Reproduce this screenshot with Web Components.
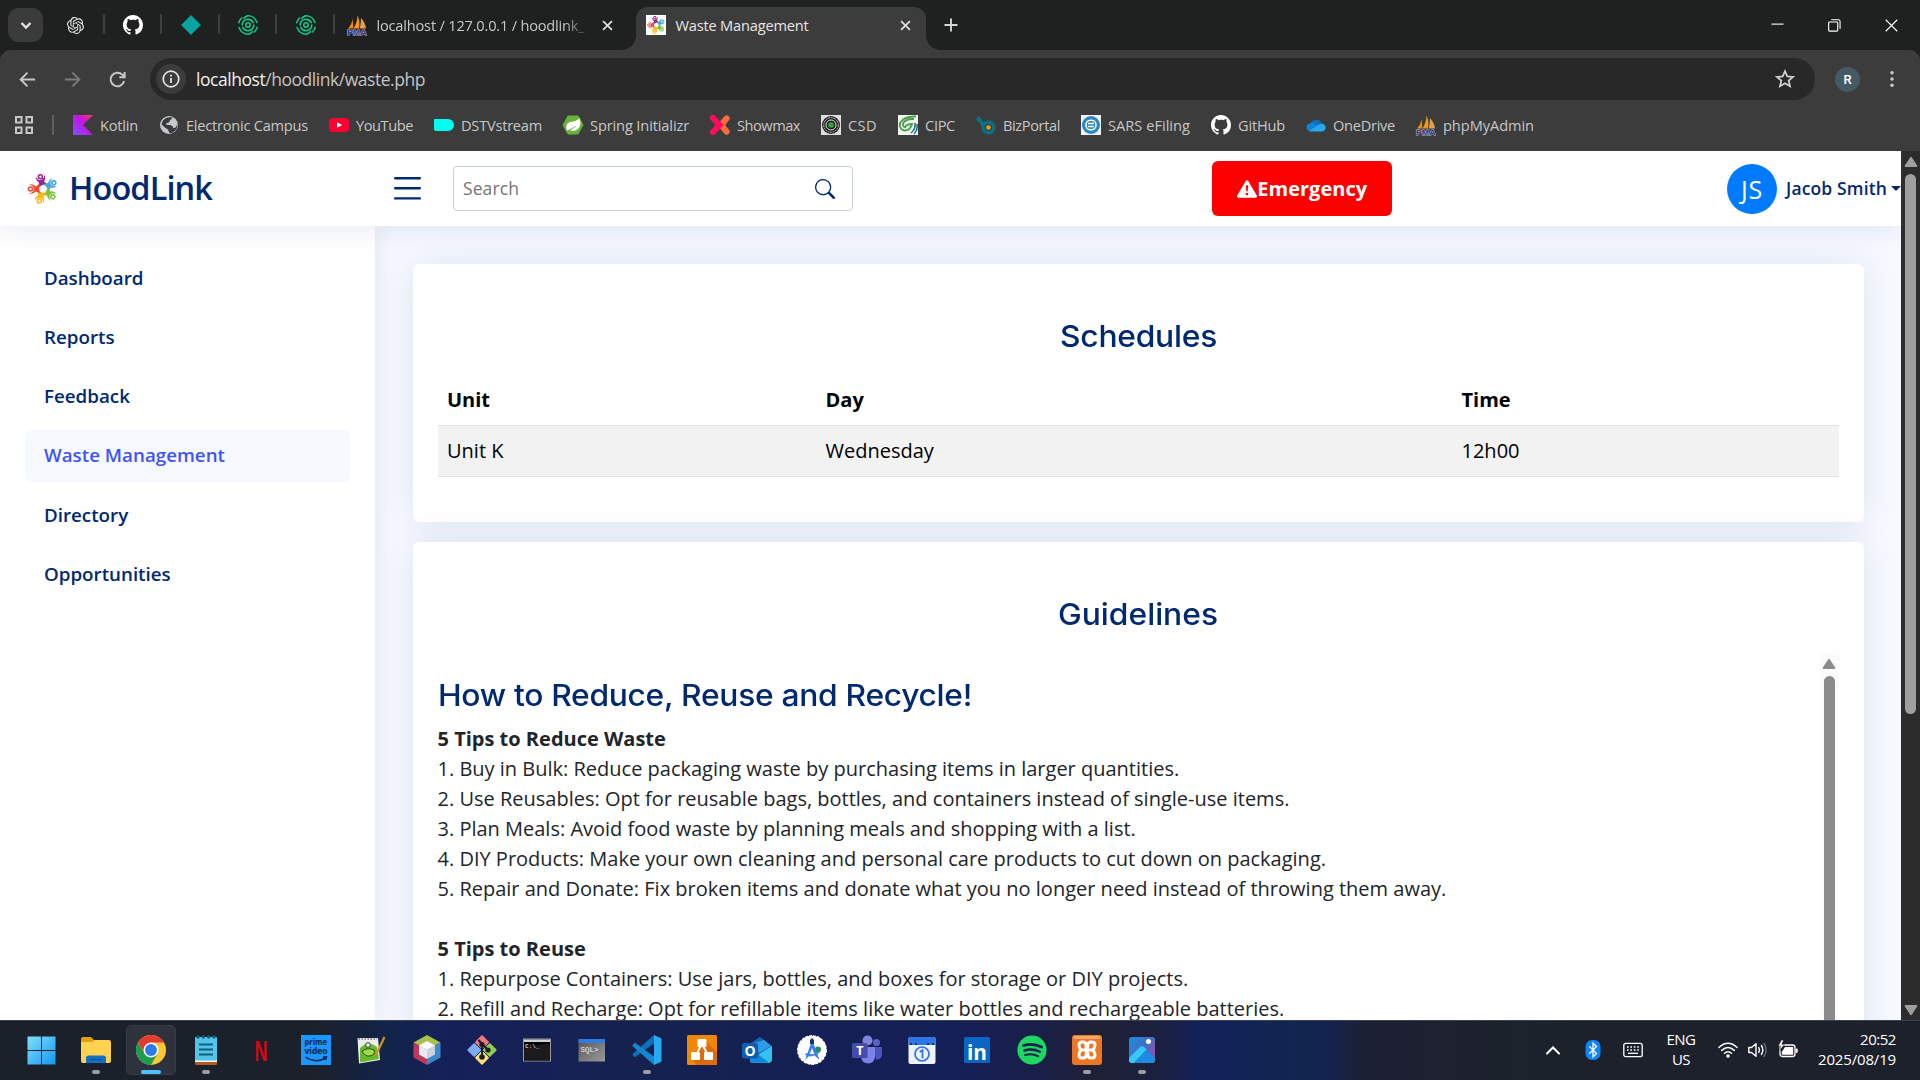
<!DOCTYPE html>
<html lang="en">
<head>
<meta charset="utf-8">
<title>Waste Management</title>
<style>
html,body{margin:0;padding:0;height:1080px;overflow:hidden}
body{font-family:"Open Sans","Noto Sans",sans-serif;font-size:20px;color:#212529;background:#fff}
</style>
</head>
<body>
<desktop-screen></desktop-screen>
<script>
const define = (name, html, setup) => customElements.define(name, class extends HTMLElement {
  connectedCallback() {
    if (this.shadowRoot) return;
    const root = this.attachShadow({ mode: 'open' });
    const t = document.createElement('template');
    t.innerHTML = typeof html === 'function' ? html(this) : html;
    root.append(t.content.cloneNode(true));
    if (setup) setup(this, root);
  }
});

/* Text set to a given advance width through letter spacing; sx widens the glyphs themselves. */
define('fit-text', `<style>:host{display:inline-block;white-space:nowrap;flex:none}span{display:inline-block;transform-origin:0 50%}</style><span><slot></slot></span>`,
  (el, root) => {
    const w = +el.getAttribute('w'), sx = +el.getAttribute('sx') || 1;
    if (!w) return;
    const s = root.querySelector('span'), n = el.textContent.length;
    s.style.letterSpacing = ((w / sx - s.getBoundingClientRect().width) / n) + 'px';
    if (sx !== 1) s.style.transform = `scaleX(${sx})`;
    el.style.width = w + 'px';
    el.style.textAlign = 'left';
  });

const sv = (vb, body) => `<svg viewBox="${vb}" xmlns="http://www.w3.org/2000/svg">${body}</svg>`;
const line = (d, c = '#c7c7c7', w = 2, x = '') => `<path d="${d}" fill="none" stroke="${c}" stroke-width="${w}" ${x}/>`;
const octocat = `<path fill="#fff" d="M8 0C3.58 0 0 3.58 0 8c0 3.54 2.29 6.53 5.47 7.59.4.07.55-.17.55-.38 0-.19-.01-.82-.01-1.49-2.01.37-2.53-.49-2.69-.94-.09-.23-.48-.94-.82-1.13-.28-.15-.68-.52-.01-.53.63-.01 1.08.58 1.23.82.72 1.21 1.87.87 2.33.66.07-.52.28-.87.51-1.07-1.78-.2-3.64-.89-3.64-3.95 0-.87.31-1.59.82-2.15-.08-.2-.36-1.02.08-2.12 0 0 .67-.21 2.2.82.64-.18 1.32-.27 2-.27s1.36.09 2 .27c1.53-1.04 2.2-.82 2.2-.82.44 1.1.16 1.92.08 2.12.51.56.82 1.27.82 2.15 0 3.07-1.87 3.75-3.65 3.95.29.25.54.73.54 1.48 0 1.07-.01 1.93-.01 2.2 0 .21.15.46.55.38A8.01 8.01 0 0 0 16 8c0-4.42-3.58-8-8-8z"/>`;
const person = (c, a) => `<g transform="rotate(${a} 15 15)"><circle cx="15" cy="2.500" r="2" fill="none" stroke="${c}" stroke-width="1.600"/><path d="M10.500 1.200C9.800 4 11 6.600 12.400 7.600L10.600 13.200Q14.500 9.600 20.600 12L17.600 7.600C19 6.600 20.200 4 19.500 1.200 18.600 4.300 17 5.800 15 5.800 13 5.800 11.400 4.300 10.500 1.200Z" fill="${c}"/></g>`;
const people = person('#95278f', -12) + person('#4aa8e0', 60) + person('#7fc241', 128) + person('#fdb813', 197) + person('#ef4b33', 270);

const ICONS = {
  chevdown: sv('0 0 20 20', line('M5.500 8 10 12.500 14.500 8', '#e3e3e3', 2.4)),
  openai: sv('0 0 24 24', `<path fill="#e8e8e8" d="M22.2819 9.8211a5.9847 5.9847 0 0 0-.5157-4.9108 6.0462 6.0462 0 0 0-6.5098-2.9A6.0651 6.0651 0 0 0 4.9807 4.1818a5.9847 5.9847 0 0 0-3.9977 2.9 6.0462 6.0462 0 0 0 .7427 7.0966 5.98 5.98 0 0 0 .511 4.9107 6.051 6.051 0 0 0 6.5146 2.9001A5.9847 5.9847 0 0 0 13.2599 24a6.0557 6.0557 0 0 0 5.7718-4.2058 5.9894 5.9894 0 0 0 3.9977-2.9001 6.0557 6.0557 0 0 0-.7475-7.0729zm-9.022 12.6081a4.4755 4.4755 0 0 1-2.8764-1.0408l.1419-.0804 4.7783-2.7582a.7948.7948 0 0 0 .3927-.6813v-6.7369l2.02 1.1686a.071.071 0 0 1 .038.052v5.5826a4.504 4.504 0 0 1-4.4945 4.4944zm-9.6607-4.1254a4.4708 4.4708 0 0 1-.5346-3.0137l.142.0852 4.783 2.7582a.7712.7712 0 0 0 .7806 0l5.8428-3.3685v2.3324a.0804.0804 0 0 1-.0332.0615L9.74 19.9502a4.4992 4.4992 0 0 1-6.1408-1.6464zM2.3408 7.8956a4.485 4.485 0 0 1 2.3655-1.9728V11.6a.7664.7664 0 0 0 .3879.6765l5.8144 3.3543-2.0201 1.1685a.0757.0757 0 0 1-.071 0l-4.8303-2.7865A4.504 4.504 0 0 1 2.3408 7.872zm16.5963 3.8558L13.1038 8.364 15.1192 7.2a.0757.0757 0 0 1 .071 0l4.8303 2.7913a4.4944 4.4944 0 0 1-.6765 8.1042v-5.6772a.79.79 0 0 0-.407-.667zm2.0107-3.0231l-.142-.0852-4.7735-2.7818a.7759.7759 0 0 0-.7854 0L9.409 9.2297V6.8974a.0662.0662 0 0 1 .0284-.0615l4.8303-2.7866a4.4992 4.4992 0 0 1 6.6802 4.66zM8.3065 12.863l-2.02-1.1638a.0804.0804 0 0 1-.038-.0567V6.0742a4.4992 4.4992 0 0 1 7.3757-3.4537l-.142.0805L8.704 5.459a.7948.7948 0 0 0-.3927.6813zm1.0976-2.3654l2.602-1.4998 2.6069 1.4998v2.9994l-2.5974 1.4997-2.6067-1.4997Z"/>`),
  github: sv('0 0 16 16', octocat),
  diamond: sv('0 0 20 20', `<path d="M10 .6 19.400 10 10 19.400 .6 10Z" fill="#0aa5a0" stroke="#0aa5a0" stroke-linejoin="round"/>`),
  finger: sv('0 0 20 20', `<g fill="none" stroke="#12c98b" stroke-width="1.600" stroke-linecap="round"><circle cx="10" cy="10" r="2.200"/><path d="M4.200 10a5.800 5.800 0 0 1 11-2.300M15.800 10a5.800 5.800 0 0 1-11 2.300M.9 7.600A9.300 9.300 0 0 1 3.600 3M5.800 3.300A9 9 0 0 1 9 .9C13.500 .4 17.500 3 18.900 7.400M19.100 12.400A9.300 9.300 0 0 1 16.400 17M14.200 16.700A9 9 0 0 1 11 19.100C6.500 19.600 2.500 17 1.100 12.600"/></g>`),
  pma: sv('0 0 20 20', `<path d="M1 13.500Q5 9 5.600 3.500L6.400 13.500Z" fill="#e88a1a"/><path d="M6.600 13.500Q10.500 7 10.500 .3 13.500 7 12 13.500Z" fill="#f7941d"/><path d="M12.800 13.500Q14 8 14 3 18.500 8 19 13.500Z" fill="#e0a050"/><text x="0" y="19.800" font-family="Liberation Sans" font-weight="700" font-size="7.600" fill="#34357a" stroke="#b9b9d8" stroke-width=".9" paint-order="stroke" textLength="19.500" lengthAdjust="spacingAndGlyphs">PMA</text>`),
  hood: sv('0 0 30 30', people),
  hoodtile: sv('0 0 30 30', `<rect width="30" height="30" fill="#fff"/><g transform="translate(2 1.500) scale(.9)">${people}</g>`),
  close: sv('0 0 14 14', line('M2.200 2.200 11.800 11.800M11.800 2.200 2.200 11.800', '#dedede', 1.9)),
  plus: sv('0 0 14 14', line('M7 .5V13.500M.5 7H13.500', '#d6d6d6', 1.9)),
  wmin: sv('0 0 14 14', line('M.5 5.500H13.500', '#fff', 1.2)),
  wmax: sv('0 0 14 14', `<rect x=".7" y="3.200" width="9.800" height="9.800" rx="1" fill="none" stroke="#fff" stroke-width="1.200"/>` + line('M3.500 .8H11.200Q13 .8 13 2.600V10.500', '#fff', 1.2)),
  wclose: sv('0 0 14 14', line('M.8 .8 13.200 13.200M13.200 .8 .8 13.200', '#fff', 1.2)),
  back: sv('0 0 20 20', line('M18 10H3M10 2.800 2.800 10 10 17.200', '#c7c7c7', 2)),
  fwd: sv('0 0 20 20', line('M2 10H17M10 2.800 17.200 10 10 17.200', '#7b7b7b', 2)),
  reload: sv('0 0 20 20', line('M16.300 11.500A6.500 6.500 0 1 1 14.600 5.400L16.600 7.400M16.800 2.800V7.800H11.800', '#c7c7c7', 1.9)),
  info: sv('0 0 20 20', `<circle cx="10" cy="10" r="7.800" fill="none" stroke="#e3e3e3" stroke-width="1.700"/><path d="M9.100 9h1.800v5H9.100zM9.100 5.800h1.800v1.800H9.100z" fill="#e3e3e3"/>`),
  star: sv('0 0 20 20', line('M10 2.200 12.300 7.400 18 7.900 13.700 11.600 15 17.200 10 14.200 5 17.200 6.300 11.600 2 7.900 7.700 7.400Z', '#d0d0d0', 1.8)),
  dots: sv('0 0 20 20', `<g fill="#c7c7c7"><circle cx="10" cy="3" r="2"/><circle cx="10" cy="10" r="2"/><circle cx="10" cy="17" r="2"/></g>`),
  apps: sv('0 0 20 20', `<g fill="none" stroke="#c7c7c7" stroke-width="2"><rect x="2" y="2" width="5.500" height="5.500"/><rect x="12.500" y="2" width="5.500" height="5.500"/><rect x="2" y="12.500" width="5.500" height="5.500"/><rect x="12.500" y="12.500" width="5.500" height="5.500"/></g>`),
  kotlin: sv('0 0 20 20', `<defs><linearGradient id="k" x1="1" y1="0" x2="0" y2="1"><stop offset="0" stop-color="#e44857"/><stop offset=".4" stop-color="#c711e1"/><stop offset="1" stop-color="#7f52ff"/></linearGradient></defs><path d="M0 0H20L10 10 20 20H0Z" fill="url(#k)"/>`),
  globe: sv('0 0 20 20', `<circle cx="10" cy="10" r="9" fill="#c4c7cb"/><path d="M6.200 3.500Q10 1.500 13.500 2.600 14 5 11 5.500 10.500 8 7.500 8V10H12Q14.500 11 14.500 13 18 12.500 17.800 9.200L18.400 8Q19.300 15 13 18 11 18.500 10 17.200L9 14.500Q6 13 2.600 9.500 3 5.500 6.200 3.500Z" fill="#3c3c3c"/><path d="M11 5.500Q13.500 4 13 2.500 18 5 18 10 17 12.500 14.500 13 14 10.500 11.500 10H8V8.400Q11 8 11 5.500Z" fill="#c4c7cb"/>`),
  youtube: sv('0 0 20 20', `<rect y="3" width="20" height="14" rx="3.500" fill="#ff0033"/><path d="M8 7.200 13.200 10 8 12.800Z" fill="#fff"/>`),
  dstv: sv('0 0 20 20', `<path d="M0 4H14A6 6 0 0 1 14 16H2Q0 16 0 14Z" fill="#00ffee"/>`),
  spring: sv('0 0 20 20', `<path d="M5 1H15L20 10 15 19H5L0 10Z" fill="#68b13a" stroke="#68b13a" stroke-linejoin="round"/><path d="M4 15.500Q1.500 9 7 7 14 6.500 16.500 3 19 10 15 14 11 17.300 6.500 15.200 10 14.600 14 10 9 14 4 15.500Z" fill="#fff"/>`),
  showmax: sv('0 0 20 20', `<path d="M16.600 3.400 12.500 8.500M16.600 16.600 12.500 11.500" stroke="#ff6b3d" stroke-width="6" stroke-linecap="round"/><path d="M3 3 9.500 10 3 17" fill="none" stroke="#ff0d5c" stroke-width="6" stroke-linecap="round"/>`),
  csd: sv('0 0 20 20', `<rect width="20" height="20" fill="#dfe0dd"/><circle cx="10" cy="10" r="9" fill="#222"/><circle cx="10" cy="10" r="7.300" fill="none" stroke="#ccc" stroke-width=".9" stroke-dasharray="2 .6"/><circle cx="10" cy="10" r="5" fill="none" stroke="#ddd"/><circle cx="10" cy="10" r="2.800" fill="#35a535"/>`),
  cipc: sv('0 0 20 20', `<rect width="20" height="20" fill="#f3f5f1"/><path d="M18 1.500Q6 1 2 8 1 14 6 15.500 12 16 14 9 9 9 7.500 11.500M16 4Q8 3.500 5 8.500 4.500 12 8 12.500" fill="none" stroke="#49a248" stroke-width="1.900"/><path d="M17 8Q18 14 13 18M19 9Q20 15 16 19" fill="none" stroke="#1e7185" stroke-width="1.600"/>`),
  biz: sv('0 0 20 20', `<circle cx="12.500" cy="12.500" r="5.300" fill="none" stroke="#0b7285" stroke-width="3.500"/><path d="M1.500 2.500 8 11" stroke="#0b7285" stroke-width="4"/><circle cx="12.500" cy="12.500" r="2.300" fill="#f39c12"/>`),
  sars: sv('0 0 20 20', `<rect width="20" height="20" fill="#eef4f9"/><circle cx="10" cy="10" r="9" fill="#2e86c1"/><rect x="5" y="5.200" width="10" height="9.600" rx="4.500" fill="none" stroke="#fff" stroke-width="1.500"/><path d="M7 8.500H13M7 11.500H13" stroke="#fff" stroke-width="1.300"/>`),
  onedrive: sv('0 0 20 20', `<path d="M4.500 8.500A6 6 0 0 1 15.500 8 4.500 4.500 0 0 1 17 16H4.500A4 4 0 0 1 4.500 8.500Z" fill="#0f6cbd"/><path d="M4.500 8.500Q7 7.500 9 9L15 13 4 16.200A4.200 4.200 0 0 1 .5 12Q.8 8.700 4.500 8.500Z" fill="#1283d8"/><path d="M3 16 11 10.800Q15 7.600 18 9.300 20 10.800 19.600 13.500 18.500 16.400 16 16.400H4.500Q3.500 16.400 3 16Z" fill="#28a8ea"/>`),
  burger: sv('0 0 27 25', line('M1.200 2.200H25.800M1.200 12.300H25.800M1.200 22.400H25.800', '#012970', 2.4, 'stroke-linecap="round"')),
  search: sv('0 0 16 16', `<path fill="#012970" d="M11.742 10.344a6.500 6.500 0 1 0-1.397 1.398h-.001c.03.04.062.078.098.115l3.850 3.850a1 1 0 0 0 1.415-1.414l-3.850-3.850a1.007 1.007 0 0 0-.115-.1zM12 6.500a5.500 5.500 0 1 1-11 0 5.500 5.500 0 0 1 11 0z"/>`),
  warn: sv('0 0 16 16', `<path fill="#fff" d="M8.982 1.566a1.130 1.130 0 0 0-1.960 0L.165 13.233c-.457.778.091 1.767.98 1.767h13.713c.889 0 1.438-.99.98-1.767L8.982 1.566zM8 5c.535 0 .954.462.9.995l-.35 3.507a.552.552 0 0 1-1.100 0L7.100 5.995A.905.905 0 0 1 8 5zm.002 6a1 1 0 1 1 0 2 1 1 0 0 1 0-2z"/>`),
  windows: sv('0 0 30 30', `<defs><linearGradient id="w" x2="1" y2="1"><stop offset="0" stop-color="#7fe0ff"/><stop offset="1" stop-color="#1497ef"/></linearGradient></defs><path d="M.5 .5H14.500V14.500H.5ZM15.500 .5H29.500V14.500H15.500ZM.5 15.500H14.500V29.500H.5ZM15.500 15.500H29.500V29.500H15.500Z" fill="url(#w)"/>`),
  folder: sv('0 0 30 30', `<path d="M0 4Q0 2 2 2H10L13 5H28V12H0Z" fill="#e0a10c"/><path d="M0 7H11L14 5H28Q30 5 30 7V26Q30 28 28 28H2Q0 28 0 26Z" fill="#ffd251"/><path d="M5 28V23Q5 20.500 7.500 20.500H22.500Q25 20.500 25 23V28Z" fill="#1273c4"/><path d="M9 24.500H21" stroke="#0b4f93" stroke-width="1.400"/>`),
  chrome: sv('0 0 30 30', `<circle cx="15" cy="15" r="15" fill="#fcc934"/><path d="M2 7.500A15 15 0 0 1 28 7.500H15L8.500 18.750Z" fill="#e33b2e"/><path d="M2 7.500A15 15 0 0 0 15 30L21.500 18.750 8.500 18.750Z" fill="#1e9b4e"/><circle cx="15" cy="15" r="7.500" fill="#fff"/><circle cx="15" cy="15" r="6" fill="#2b7de9"/>`),
  notepad: sv('0 0 30 30', `<rect x="4" y="24" width="22" height="6" rx="1" fill="#b25a1c"/><rect x="4" y="22" width="22" height="5" fill="#eef4f7"/><rect x="4" y="2" width="22" height="23.500" rx="1" fill="#54c3e8"/><path d="M8 9.500H22M8 14.500H22M8 19.500H22" stroke="#0d6080" stroke-width="1.800"/><g fill="#14617e"><circle cx="7" cy="2" r="1.700"/><circle cx="12.300" cy="2" r="1.700"/><circle cx="17.700" cy="2" r="1.700"/><circle cx="23" cy="2" r="1.700"/></g>`),
  netflix: sv('0 0 30 30', `<text x="8.500" y="26" font-family="Liberation Sans" font-weight="700" font-size="30" fill="#d20a12" textLength="13" lengthAdjust="spacingAndGlyphs">N</text>`),
  prime: sv('0 0 30 30', `<rect width="30" height="30" fill="#1a98ff"/><g font-family="Open Sans" font-weight="700" font-size="8" fill="#06213c"><text x="3.500" y="9.500" textLength="22.500" lengthAdjust="spacingAndGlyphs">prime</text><text x="3.500" y="19" textLength="23" lengthAdjust="spacingAndGlyphs">video</text></g>` + line('M4.500 22Q14 28.500 24 23.500M22 22H25.500L24.500 25', '#06213c', 1.4)),
  npp: sv('0 0 30 30', `<path d="M1.500 3H22L24 25 3 28.500Z" fill="#eceee9"/><path d="M4 13Q12 5 21 12L23 24 4 27.500Z" fill="#67b92e"/><path d="M6 16Q12 12 18 15 20 20 14 21 9 22 6 16" fill="#9ddb4a" stroke="#27520f" stroke-width="1"/><circle cx="12" cy="10" r="2.400" fill="#dff0c9" stroke="#345"/><path d="M2.500 4H21" stroke="#777" stroke-width="1.500" stroke-dasharray="1.500 1.500"/><path d="M28.500 2 20 20" stroke="#d99021" stroke-width="2.200"/>`),
  netbeans: sv('0 0 30 30', `<path d="M15 0 28.500 7.500 15 15 1.500 7.500Z" fill="#a9c04c"/><path d="M1.500 7.500 15 15V30L1.500 22.500Z" fill="#c1385f"/><path d="M28.500 7.500 15 15V30L28.500 22.500Z" fill="#3f86cf"/><path d="M15 6 23 10.500 15 15 7 10.500Z" fill="#fff"/><path d="M7 10.500 15 15V24L7 19.500Z" fill="#e9edf0"/><path d="M23 10.500 15 15V24L23 19.500Z" fill="#c9d3da"/>`),
  git: sv('0 0 30 30', `<g transform="rotate(45 15 15)"><rect x="4.500" y="4.500" width="10" height="10" rx="1" fill="#f3787a"/><rect x="15.500" y="4.500" width="10" height="10" rx="1" fill="#f3787a"/><rect x="4.500" y="15.500" width="10" height="10" rx="1" fill="#7faaf5"/><rect x="15.500" y="15.500" width="10" height="10" rx="1" fill="#8cd24f"/></g><g transform="rotate(45 15 15)"><rect x="4.500" y="4.500" width="10" height="10" rx="1" fill="#f3787a"/><rect x="15.500" y="4.500" width="10" height="10" rx="1" fill="#8cd24f"/><rect x="4.500" y="15.500" width="10" height="10" rx="1" fill="#7faaf5"/><rect x="15.500" y="15.500" width="10" height="10" rx="1" fill="#ffdf75"/></g>` + line('M11.500 5 15 9V22M15 9 21 15', '#1d1d2b', 2) + `<g fill="#1d1d2b"><circle cx="15" cy="9.500" r="2.600"/><circle cx="15" cy="22" r="2.800"/><circle cx="21" cy="15" r="2.600"/></g>`),
  cmd: sv('0 0 30 30', `<rect x="1.500" y="4" width="27" height="22" fill="#050505" stroke="#999"/><rect x="2" y="4.500" width="26" height="2.500" fill="#cfd3d6"/><path d="M2 14Q16 9 28 9V25.500H2Z" fill="#1b1b1b"/><text x="3" y="13" font-family="Liberation Mono" font-weight="700" font-size="6" fill="#d8d8d8">C:\\_</text>`),
  sql: sv('0 0 30 30', `<defs><linearGradient id="q" x2="1" y2="1"><stop offset="0" stop-color="#555"/><stop offset="1" stop-color="#9a9a9a"/></linearGradient></defs><rect x="1.500" y="4" width="26.500" height="22.500" fill="url(#q)"/><rect x="1.500" y="4" width="26.500" height="4" fill="#2f7be0"/><text x="3.500" y="17" font-family="Liberation Mono" font-size="7.500" fill="#eee" textLength="18">SQL&gt;</text>`),
  vscode: sv('0 0 30 30', `<path d="M22 0 29.500 3.500V26.500L22 30Z" fill="#29a9f2"/><path d="M22 0 1 18.500Q0 19.500 1 20.500L3 22.200 22 8.500Z" fill="#0a70b8"/><path d="M22 30 1 11.500Q0 10.500 1 9.500L3 7.800 22 21.500Z" fill="#1487cf"/>`),
  drawio: sv('0 0 30 30', `<rect width="30" height="30" rx="1.500" fill="#f08705"/><path d="M18 5 30 17V28.500Q30 30 28.500 30H10L4 24Z" fill="#df6c0c"/><path d="M15 9 9 20M15 9 21 20" stroke="#fff" stroke-width="2"/><g fill="#fff"><rect x="10.500" y="4" width="9" height="8" rx="1"/><rect x="4" y="17" width="9" height="8" rx="1"/><rect x="17" y="17" width="9" height="8" rx="1"/></g>`),
  outlook: sv('0 0 30 30', `<path d="M6 10 18 2 30 11 18 20Z" fill="#1565b5"/><path d="M12 8 22 5 29 11 17 18Z" fill="#2c9be8"/><path d="M30 11V24Q30 28 26 28H10Q8 28 8 25Z" fill="#33c2ef"/><path d="M8 13 27 27.800H11Q8 28 8 25Z" fill="#1189d8"/><rect y="8" width="16" height="15.500" rx="2" fill="#0f5eb0"/><text x="8" y="20.500" text-anchor="middle" font-family="Open Sans" font-weight="700" font-size="14" fill="#fff">O</text>`),
  astudio: sv('0 0 30 30', `<circle cx="15" cy="15" r="14.300" fill="#fff" stroke="#fff" stroke-width="1.200" stroke-dasharray="3 1"/><circle cx="21" cy="14.500" r="3" fill="#22914b"/><path d="M14.500 7 8 25 12 21 15 13 18 21 22.500 25 16 7Z" fill="#3b7ded"/><path d="M8.500 19Q15 22.500 22 17" fill="none" stroke="#3b7ded" stroke-width="2"/><path d="M13 9V5L15 3 17 5V9Z" fill="#1b3461"/>`),
  teams: sv('0 0 30 30', `<circle cx="24.500" cy="7.500" r="3.500" fill="#5b62c4"/><path d="M21 12H30V20Q29 25 24 24.500Z" fill="#4b53bc"/><circle cx="15.500" cy="5.500" r="5" fill="#8186dd"/><path d="M9 12H23V22Q22 28.500 16 28.500 10 28 9 22Z" fill="#7b83eb"/><rect y="8" width="15.500" height="15" rx="1.500" fill="#474ba8"/><text x="7.800" y="20" text-anchor="middle" font-family="Open Sans" font-weight="700" font-size="12.500" fill="#fff">T</text>`),
  calendar: sv('0 0 30 30', `<rect x="1.500" y="2" width="27" height="27" rx="2" fill="#eef3fb"/><path d="M1.500 10V4Q1.500 2 3.500 2H26.500Q28.500 2 28.500 4V10Z" fill="#2f76e4"/><path d="M4 8V10M9 8V10M21 8V10M26 8V10" stroke="#123" stroke-width="1.500"/><circle cx="15" cy="19" r="7" fill="none" stroke="#2f76e4" stroke-width="1.700"/>` + line('M12.800 17 15.500 15V23.500', '#2f76e4', 1.8)),
  linkedin: sv('0 0 30 30', `<rect x="2" y="2" width="26" height="26" rx="1.500" fill="#0a66c2"/><text x="15" y="24.500" text-anchor="middle" font-family="Open Sans" font-weight="700" font-size="22" fill="#fff" textLength="20" lengthAdjust="spacingAndGlyphs">in</text>`),
  spotify: sv('0 0 30 30', `<circle cx="15" cy="15" r="14.600" fill="#1ed760"/>` + line('M6.500 10.500Q16 7.500 24.500 12', '#14204f', 2.8, 'stroke-linecap="round"') + line('M7.500 15.500Q15.500 13 22.800 16.800', '#14204f', 2.4, 'stroke-linecap="round"') + line('M8.200 20Q15 18 21 21.200', '#14204f', 2, 'stroke-linecap="round"')),
  xampp: sv('0 0 30 30', `<rect width="30" height="30" rx="3" fill="#ee7623"/><rect x="1.500" y="1" width="27" height="3" rx="1.500" fill="#f9a66c"/><path d="M14 12V10Q14 7 11 7H10Q7 7 7 10 7 12.500 9 15 7 17.500 7 20 7 23 10 23H11Q14 23 14 20L16 10Q16 7 19 7H20Q23 7 23 10 23 12.500 21 15 23 17.500 23 20 23 23 20 23H19Q16 23 16 20V18M10.500 15H19.500" fill="none" stroke="#fff" stroke-width="3" stroke-linecap="round" stroke-linejoin="round"/>`),
  photos: sv('0 0 30 30', `<defs><linearGradient id="p" x2="1" y2=".8"><stop offset="0" stop-color="#1a90e0"/><stop offset=".5" stop-color="#3f6fc4"/><stop offset="1" stop-color="#a04bb0"/></linearGradient></defs><rect x="2" y="2" width="26" height="26" rx="3" fill="url(#p)"/><path d="M2 23 12.500 12.500Q15 10 17.500 12.500L28 23V25Q28 28 25 28H5Q2 28 2 25Z" fill="#1c8be0"/><path d="M2 23 12.500 12.500Q15 10 17.500 12.500L19.500 14.500 6.500 28H5Q2 28 2 25Z" fill="#37c8f6"/><circle cx="21.500" cy="6.500" r="2.500" fill="#fff"/>`),
  up: sv('0 0 20 20', line('M4 13.500 10 7.500 16 13.500', '#fff', 2, 'stroke-linecap="round"')),
  bt: sv('0 0 20 20', `<rect x="2.500" width="15" height="20" rx="6.500" fill="#0a84ff"/>` + line('M6.200 6.200 13.500 13.500 10 17V3L13.500 6.500 6.200 13.800', '#fff', 1.3)),
  kbd: sv('0 0 20 20', `<rect x=".8" y="3.300" width="18.400" height="13.400" rx="2" fill="none" stroke="#fff" stroke-width="1.300"/><path d="M4 7H16.500M4 10H16.500" stroke="#fff" stroke-width="1.500" stroke-dasharray="1.600 1.800"/><path d="M5 13.300H15" stroke="#fff" stroke-width="1.300"/>`),
  wifi: sv('0 0 20 20', `<g fill="none" stroke="#fff" stroke-width="1.500" stroke-linecap="round"><path d="M.9 7.500Q10-1 19.100 7.500M3.700 10.400Q10 4.700 16.300 10.400M6.500 13.200Q10 10.200 13.500 13.200"/></g><circle cx="10" cy="16" r="1.800" fill="#fff"/>`),
  vol: sv('0 0 20 20', `<g fill="none" stroke="#fff" stroke-width="1.400" stroke-linecap="round" stroke-linejoin="round"><path d="M.8 7.500H3.500L8 3.700V16.300L3.500 12.500H.8Z"/><path d="M10.800 7.600Q12.300 10 10.800 12.400M13.400 5.500Q16.300 10 13.400 14.500"/><path d="M16 3.500Q20.300 10 16 16.500" stroke="#666b75"/></g>`),
  battery: sv('0 0 20 20', `<rect x="2" y="5" width="15" height="11.500" rx="2.500" fill="none" stroke="#fff" stroke-width="1.300"/><path d="M7 7H15.200V14.700H3.800V12Z" fill="#fff"/><rect x="17.700" y="8.500" width="2" height="4.400" rx="1" fill="#fff"/><path d="M3.500 0 .2 6H2.700L1.700 10.500 6.300 4.500H3.800L5.500 0Z" fill="#fff" stroke="#1c212b" stroke-width=".5"/>`),
  triup: sv('0 0 14 12', `<path d="M7 1.800 12.400 10H1.600Z" fill="currentColor" stroke="currentColor" stroke-width="1.800" stroke-linejoin="round"/>`),
  tridown: sv('0 0 14 12', `<path d="M7 10.200 12.400 2H1.600Z" fill="currentColor" stroke="currentColor" stroke-width="1.800" stroke-linejoin="round"/>`)
};
define('ui-icon', el => {
  const s = el.getAttribute('size') || 20, h = el.getAttribute('h') || s;
  return `<style>:host{display:block;flex:none;width:${s}px;height:${h}px}svg{display:block;width:100%;height:100%;overflow:visible}</style>${ICONS[el.getAttribute('name')]}`;
});

/* ---------- browser window ---------- */
define('pinned-tab', el => `<style>:host{display:flex;width:57.500px;height:34px;align-items:center;justify-content:center;position:relative;flex:none}
:host::after{content:"";position:absolute;right:0;top:6px;width:2px;height:20px;border-radius:1px;background:#3f403f}</style><ui-icon name="${el.getAttribute('icon')}" size="${el.getAttribute('size') || 20}"></ui-icon>`);

define('tab-strip', `<style>
:host{display:flex;height:50px;background:#1f2120;align-items:center;box-sizing:border-box;padding-left:8px;font-size:14.600px;color:#c8c8c8}
.drop{width:35px;height:34px;border-radius:11px;background:#3b3b3b;display:grid;place-items:center;margin-right:4px;flex:none}
.pins{display:flex}
.old{display:flex;align-items:center;width:289px;margin-left:12px;flex:none;box-sizing:border-box}
.old .t{width:212px;margin-left:10px;overflow:hidden;margin-right:12px;-webkit-mask:linear-gradient(90deg,#000 88%,transparent)}
.act{position:relative;display:flex;align-items:center;box-sizing:border-box;width:290px;height:43px;margin:7px 0 0;padding:0 14px 7px 10px;background:#3c3c3c;border-radius:12px 12px 0 0;color:#e6e6e6;flex:none}
.act::before,.act::after{content:"";position:absolute;bottom:0;width:14px;height:14px}
.act::before{left:-14px;background:radial-gradient(circle at 0 0,transparent 13.500px,#3c3c3c 14px)}
.act::after{right:-14px;background:radial-gradient(circle at 100% 0,transparent 13.500px,#3c3c3c 14px)}
.act fit-text{margin-left:10px}.act .x{margin-left:auto}
.plus{margin-left:18px}.win{margin-left:auto;display:flex;gap:44px;padding-right:22px}
</style>
<div class="drop"><ui-icon name="chevdown" size="20"></ui-icon></div>
<div class="pins"><pinned-tab icon="openai" size="17"></pinned-tab><pinned-tab icon="github"></pinned-tab><pinned-tab icon="diamond"></pinned-tab><pinned-tab icon="finger"></pinned-tab><pinned-tab icon="finger"></pinned-tab></div>
<div class="old"><ui-icon name="pma" size="20"></ui-icon><div class="t"><fit-text w="208">localhost / 127.0.0.1 / hoodlink_</fit-text></div><ui-icon name="close" size="13"></ui-icon></div>
<div class="act"><ui-icon name="hoodtile" size="20"></ui-icon><fit-text w="133">Waste Management</fit-text><ui-icon class="x" name="close" size="13"></ui-icon></div>
<ui-icon class="plus" name="plus" size="14"></ui-icon>
<div class="win"><ui-icon name="wmin" size="13"></ui-icon><ui-icon name="wmax" size="13"></ui-icon><ui-icon name="wclose" size="13"></ui-icon></div>`);

define('address-bar', `<style>
:host{display:flex;align-items:center;height:58px;padding-left:18px;color:#c4c4c4;font-size:17.500px;box-sizing:border-box}
.omni{width:1665px;height:42px;border-radius:21px;background:#282828;margin-left:22px;display:flex;align-items:center;box-sizing:border-box;padding:0 20px 0 6px}
.i{width:30px;height:30px;border-radius:50%;background:#3c3c3c;display:grid;place-items:center;margin-right:10px}
b{font-weight:400;color:#f0f0f0}.omni .s{margin-left:auto}
.av{width:25px;height:25px;border-radius:50%;background:#455a64;color:#fff;display:grid;place-items:center;font:500 13px Roboto,sans-serif;margin:0 23px 0 20px}
.f{margin:0 25px 0 26px}</style>
<ui-icon name="back" size="19"></ui-icon><ui-icon class="f" name="fwd" size="19"></ui-icon><ui-icon name="reload" size="21"></ui-icon>
<div class="omni"><div class="i"><ui-icon name="info" size="20"></ui-icon></div><fit-text w="229"><b>localhost</b>/hoodlink/waste.php</fit-text><ui-icon class="s" name="star" size="20"></ui-icon></div>
<div class="av">R</div><ui-icon name="dots" size="18"></ui-icon>`);

define('book-mark', el => `<style>:host{display:flex;align-items:center;gap:7px;flex:none}</style><ui-icon name="${el.getAttribute('icon')}" size="20"></ui-icon><fit-text w="${el.getAttribute('w')}">${el.textContent}</fit-text>`);
const marks = [['kotlin', 38, 'Kotlin'], ['globe', 122, 'Electronic Campus'], ['youtube', 57, 'YouTube'], ['dstv', 81, 'DSTVstream'], ['spring', 99, 'Spring Initializr'], ['showmax', 63, 'Showmax'], ['csd', 29, 'CSD'], ['cipc', 30, 'CIPC'], ['biz', 57, 'BizPortal'], ['sars', 82, 'SARS eFiling'], ['github', 47, 'GitHub'], ['onedrive', 62, 'OneDrive'], ['pma', 91, 'phpMyAdmin']];
define('bookmarks-bar', `<style>:host{display:flex;align-items:center;height:43px;padding:0 0 10px 14px;box-sizing:border-box;font-size:14.600px;color:#c7c7c7}
i{width:2px;height:20px;background:#5f5f5f;margin:0 19px 0 18px}div{display:flex;gap:21px}</style><ui-icon name="apps" size="20"></ui-icon><i></i><div>${marks.map(m => `<book-mark icon="${m[0]}" w="${m[1]}">${m[2]}</book-mark>`).join('')}</div>`);

define('browser-chrome', `<style>:host{display:block;height:151px;background:#1f2120;flex:none}.bar{background:#3c3c3c;border-radius:11px 11px 0 0;height:101px}</style><tab-strip></tab-strip><div class="bar"><address-bar></address-bar><bookmarks-bar></bookmarks-bar></div>`);

/* ---------- HoodLink page ---------- */
define('site-header', `<style>
:host{display:flex;align-items:center;height:75px;background:#fff;box-shadow:0 2.500px 25px rgba(1,41,112,.1);position:relative;z-index:3;box-sizing:border-box;padding-left:28px;color:#012970;flex:none}
.logo{font-weight:600;font-size:32.500px;line-height:40px;margin-left:11px;margin-bottom:2px}
.burger{margin-left:182px}
.box{width:401px;height:45px;border:1px solid #c6cfe2;border-radius:4px;margin-left:32px;box-sizing:border-box;display:flex;align-items:center;justify-content:space-between;padding:0 17px 0 9px;font-size:17.500px;color:#757575}
.box fit-text,.n{padding-bottom:2px}
.em{margin-left:359px;width:180px;height:55px;border-radius:6px;background:#f00;color:#fff;font-weight:700;display:flex;align-items:center;justify-content:center}
.av{width:50px;height:50px;border-radius:50%;background:#007bff;color:#fff;font-size:25px;display:grid;place-items:center;margin-left:335px;margin-right:9px}
.n{font-weight:600;font-size:17.500px}
.c{border:5px solid transparent;border-top-color:#012970;border-bottom:0;margin-left:4px}
</style><ui-icon name="hood" size="30"></ui-icon><fit-text class="logo" w="143">HoodLink</fit-text><ui-icon class="burger" name="burger" size="27" h="25"></ui-icon>
<div class="box"><fit-text w="56">Search</fit-text><ui-icon name="search" size="20"></ui-icon></div>
<div class="em"><ui-icon name="warn" size="20"></ui-icon><fit-text w="110">Emergency</fit-text></div>
<div class="av"><fit-text w="22">JS</fit-text></div><fit-text class="n" w="101">Jacob Smith</fit-text><span class="c"></span>`);

define('nav-item', `<style>:host{display:flex;align-items:center;height:52px;box-sizing:border-box;padding:0 0 1.600px 19px;border-radius:5px;color:#012970;font-weight:600;font-size:18.750px}:host([active]){background:#f6f9ff;color:#4154f1}</style><slot></slot>`);
define('side-bar', `<style>:host{display:flex;flex-direction:column;gap:7.250px;width:375px;box-sizing:border-box;padding:26px 25px;background:#fff;box-shadow:0 0 25px rgba(1,41,112,.1);flex:none;position:relative;z-index:2}</style>
<nav-item>Dashboard</nav-item><nav-item>Reports</nav-item><nav-item>Feedback</nav-item><nav-item active>Waste Management</nav-item><nav-item>Directory</nav-item><nav-item>Opportunities</nav-item>`);

define('content-card', el => `<style>:host{display:block;box-sizing:border-box;background:#fff;border-radius:6px;box-shadow:0 0 37.500px rgba(1,41,112,.1);padding:0 25px;flex:none}
.h{height:111px;box-sizing:border-box;padding-top:54px;text-align:center;font:500 30px/36px Inter,sans-serif;color:#012970}</style><div class="h"><fit-text w="${el.getAttribute('w')}" sx="1.060">${el.getAttribute('heading')}</fit-text></div><slot></slot>`);

define('schedule-table', `<style>:host{display:block;color:#000}.r{display:grid;grid-template-columns:378.500px 636px 1fr;border-bottom:1px solid #dee2e6;line-height:30px}.r>*{padding:10px 9.500px}.th{font-weight:700}.td{background:#f2f2f2}</style>
<div class="r th"><span>Unit</span><span>Day</span><span>Time</span></div><div class="r td"><span>Unit K</span><span>Wednesday</span><span>12h00</span></div>`);

define('guide-text', `<style>:host{display:flex;height:600px;line-height:30px}.b{flex:1;padding-top:24px}
h4{margin:0 0 11px;font:500 30px/36px Inter,sans-serif;color:#012970}p{margin:0 0 30px}
.s{width:19px;background:#fbfbfb;display:flex;flex-direction:column;align-items:center;color:#8b8b8b;padding-top:5px}.s i{width:11px;border-radius:6px;background:#8b8b8b;flex:1;margin-top:6px}</style>
<div class="b"><h4><fit-text w="534" sx="1.060">How to Reduce, Reuse and Recycle!</fit-text></h4>
<p><b>5 Tips to Reduce Waste</b><br>1. Buy in Bulk: Reduce packaging waste by purchasing items in larger quantities.<br>2. Use Reusables: Opt for reusable bags, bottles, and containers instead of single-use items.<br>3. Plan Meals: Avoid food waste by planning meals and shopping with a list.<br>4. DIY Products: Make your own cleaning and personal care products to cut down on packaging.<br>5. Repair and Donate: Fix broken items and donate what you no longer need instead of throwing them away.</p>
<p><b>5 Tips to Reuse</b><br>1. Repurpose Containers: Use jars, bottles, and boxes for storage or DIY projects.<br>2. Refill and Recharge: Opt for refillable items like water bottles and rechargeable batteries.</p></div>
<div class="s"><ui-icon name="triup" size="14" h="12"></ui-icon><i></i></div>`);

define('page-scroll', `<style>:host{display:flex;flex-direction:column;align-items:center;width:19px;background:#2c2c2c;color:#9f9f9f;box-sizing:border-box;padding:5px 0 4px;flex:none;position:relative;z-index:4}i{width:11px;height:540px;border-radius:6px;background:#9f9f9f;margin-top:6px}.d{margin-top:auto}</style><ui-icon name="triup" size="14" h="12"></ui-icon><i></i><ui-icon class="d" name="tridown" size="14" h="12"></ui-icon>`);

define('web-page', `<style>:host{display:flex;height:869px;overflow:hidden;flex:none}
.p{flex:1;min-width:0;display:flex;flex-direction:column;background:#f6f9ff;overflow:hidden}.m{flex:1;display:flex;min-height:0}
main{flex:1;display:flex;flex-direction:column;gap:20px;padding:38px 37.500px 0;min-width:0}</style>
<div class="p"><site-header></site-header><div class="m"><side-bar></side-bar><main>
<content-card heading="Schedules" w="157" style="height:258px"><schedule-table></schedule-table></content-card>
<content-card heading="Guidelines" w="160" style="height:720px"><guide-text></guide-text></content-card>
</main></div></div><page-scroll></page-scroll>`);

/* ---------- taskbar ---------- */
define('task-app', el => `<style>:host{display:flex;width:55.060px;height:60px;align-items:center;justify-content:center;position:relative;flex:none}
.bg{position:absolute;inset:5px 2.500px;border-radius:5px}:host([state=active]) .bg{background:#2d323c;border:1px solid #383c46;box-sizing:border-box}
.dot{position:absolute;bottom:6px;height:4px;border-radius:2px;display:none}:host([state]) .dot{display:block;width:8px;background:#9b9da3}:host([state=active]) .dot{width:20px;background:#4cc2ff}ui-icon{position:relative}</style><div class="bg"></div><ui-icon name="${el.getAttribute('icon')}" size="${el.getAttribute('size') || 30}"></ui-icon><div class="dot"></div>`);
const apps = ['windows', 'folder:open', 'chrome:active', 'notepad:open', 'netflix', 'prime', 'npp', 'netbeans', 'git', 'cmd', 'sql', 'vscode:open', 'drawio', 'outlook', 'astudio', 'teams', 'calendar', 'linkedin', 'spotify', 'xampp:open', 'photos:open'];
define('task-bar', `<style>:host{display:flex;height:60px;box-sizing:border-box;padding-left:13.700px;box-shadow:inset 0 1px #3b4252;background:linear-gradient(90deg,#1b212b 0,#1b212b 310px,#182138 345px,#11244a 385px,#15205a 450px,#15224f 640px,#141f57 950px,#191f48 1040px,#1f2035 1095px,#1b2040 1160px,#13215a 1200px,#11264f 1300px,#15224f 1330px,#1c2035 1360px,#1e212f 1450px,#1b232c 1520px,#1c212b 1600px);color:#fff;font-size:15px;line-height:20px;align-items:center;flex:none}
.tray{margin-left:auto;display:flex;align-items:center;padding-right:24px}.c{text-align:center;width:30px;margin:0 22px 0 23px}.t{text-align:right;margin-left:20px;width:78px}
.c,.t{padding-bottom:1.600px}.c fit-text,.t fit-text{display:block;margin-left:auto}.c fit-text{margin-right:auto}</style>
${apps.map(a => { const [n, s] = a.split(':'); return `<task-app icon="${n}"${n === 'windows' ? ' size="29"' : ''}${s ? ` state="${s}"` : ''}></task-app>`; }).join('')}
<div class="tray"><ui-icon name="up" size="20"></ui-icon><ui-icon name="bt" size="20" style="margin:0 20px 0 20px"></ui-icon><ui-icon name="kbd" size="20"></ui-icon><div class="c"><fit-text w="29">ENG</fit-text><fit-text w="18">US</fit-text></div><ui-icon name="wifi" size="20"></ui-icon><ui-icon name="vol" size="20" style="margin:0 10px"></ui-icon><ui-icon name="battery" size="20"></ui-icon><div class="t"><fit-text w="36">20:52</fit-text><fit-text w="78">2025/08/19</fit-text></div></div>`);

define('desktop-screen', `<style>:host{display:flex;flex-direction:column;width:1920px;height:1080px;overflow:hidden}</style><browser-chrome></browser-chrome><web-page></web-page><task-bar></task-bar>`);
</script>
</body>
</html>
